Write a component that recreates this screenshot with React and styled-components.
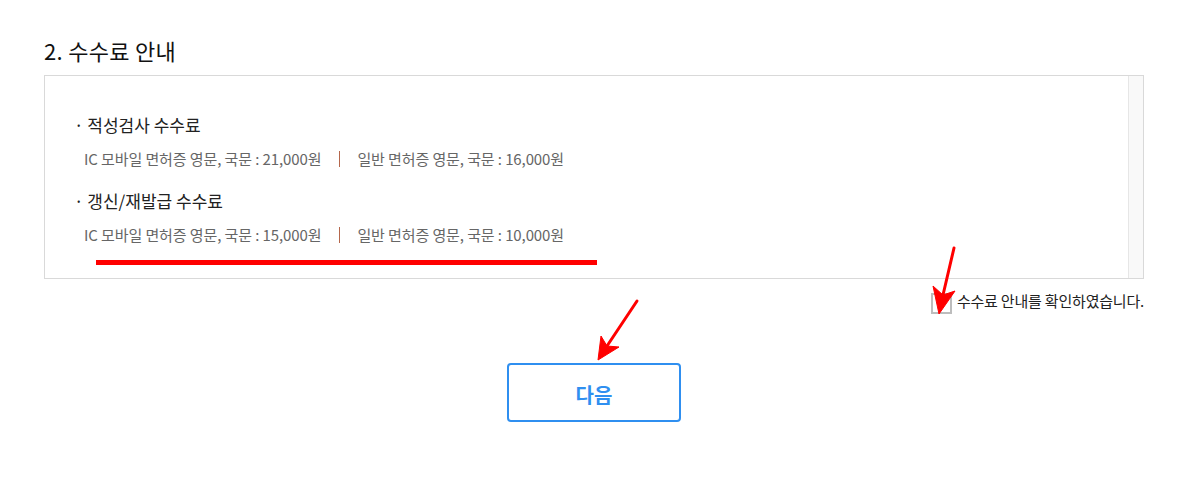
import React from 'react'
import styled, { createGlobalStyle } from 'styled-components'

const GlobalStyle = createGlobalStyle`
  html, body {
    margin: 0;
    padding: 0;
    background: #fff;
  }
  body {
    font-family: 'Noto Sans CJK KR', 'Noto Sans', sans-serif;
    color: #222;
  }
`

const Page = styled.div`
  position: relative;
  width: 1194px;
  height: 480px;
  box-sizing: border-box;
  padding: 32px 50px 0 44px;
`

const Title = styled.h2`
  margin: 0;
  font-size: 22px;
  font-weight: 400;
  line-height: 36px;
  letter-spacing: 0.3px;
  color: #111;
`

const FeeBox = styled.div`
  position: relative;
  display: flex;
  margin-top: 7px;
  height: 204px;
  box-sizing: border-box;
  border: 1px solid #d9d9d9;
`

const FeeContent = styled.div`
  flex: 1;
  padding: 37px 0 0 29px;
`

const ScrollTrack = styled.div`
  width: 14px;
  background: #f9f9f9;
  border-left: 1px solid #e6e6e6;
`

const Group = styled.div`
  & + & {
    margin-top: 19px;
  }
`

const GroupTitle = styled.div`
  font-size: 17px;
  line-height: 24px;
  color: #222;
`

const FeeLine = styled.div`
  display: flex;
  align-items: center;
  margin-top: 11px;
  padding-left: 10px;
  font-size: 15px;
  line-height: 22px;
  color: #666;
  letter-spacing: -0.1px;
`

const Divider = styled.span`
  display: inline-block;
  width: 1px;
  height: 16px;
  margin: 0 17px 0 18px;
  background: #b5674c;
`

const Underline = styled.div`
  position: absolute;
  left: 51px;
  top: 184px;
  width: 501px;
  height: 5px;
  background: #ff0000;
`

const ConfirmRow = styled.label`
  display: flex;
  justify-content: flex-end;
  align-items: center;
  gap: 5px;
  margin-top: 8px;
  font-size: 15px;
  line-height: 22px;
  color: #222;
  letter-spacing: -0.2px;
`

const CheckBox = styled.span`
  display: inline-block;
  width: 21px;
  height: 21px;
  margin-top: 6px;
  box-sizing: border-box;
  border: 2px solid #bdbdbd;
  background: #fff;
`

const ButtonRow = styled.div`
  display: flex;
  justify-content: center;
  margin-top: 49px;
`

const NextButton = styled.button`
  width: 174px;
  height: 59px;
  padding-top: 4px;
  box-sizing: border-box;
  border: 2px solid #2f8ff0;
  border-radius: 4px;
  background: #fff;
  color: #2f8ff0;
  font-family: 'Noto Sans CJK KR', sans-serif;
  font-size: 20px;
  font-weight: 700;
  cursor: pointer;
`

const Annotations = styled.svg`
  position: absolute;
  left: 0;
  top: 0;
  pointer-events: none;
`

const fees = [
  { title: '· 적성검사 수수료', ic: '21,000원', normal: '16,000원' },
  { title: '· 갱신/재발급 수수료', ic: '15,000원', normal: '10,000원' }
]

const Arrow = ({ tail, tip, notch, wingA, wingB }) => (
  <g fill='#ff0000' stroke='#ff0000'>
    <line x1={tail[0]} y1={tail[1]} x2={notch[0]} y2={notch[1]} strokeWidth='3' strokeLinecap='round' />
    <polygon points={`${tip.join(',')} ${wingA.join(',')} ${notch.join(',')} ${wingB.join(',')}`} strokeWidth='1' strokeLinejoin='round' />
  </g>
)

export default function App () {
  return (
    <Page>
      <GlobalStyle />
      <Title>2. 수수료 안내</Title>
      <FeeBox>
        <FeeContent>
          {fees.map(fee => (
            <Group key={fee.title}>
              <GroupTitle>{fee.title}</GroupTitle>
              <FeeLine>
                <span>IC 모바일 면허증 영문, 국문 : {fee.ic}</span>
                <Divider />
                <span>일반 면허증 영문, 국문 : {fee.normal}</span>
              </FeeLine>
            </Group>
          ))}
        </FeeContent>
        <ScrollTrack />
        <Underline />
      </FeeBox>
      <ConfirmRow>
        <CheckBox />
        수수료 안내를 확인하였습니다.
      </ConfirmRow>
      <ButtonRow>
        <NextButton>다음</NextButton>
      </ButtonRow>
      <Annotations width='1194' height='480' viewBox='0 0 1194 480'>
        <Arrow tail={[954, 248]} tip={[939, 314]} notch={[943, 295]} wingA={[955, 291]} wingB={[933, 286]} />
        <Arrow tail={[637, 301]} tip={[598, 360]} notch={[607, 346]} wingA={[619, 347]} wingB={[601, 336]} />
      </Annotations>
    </Page>
  )
}
